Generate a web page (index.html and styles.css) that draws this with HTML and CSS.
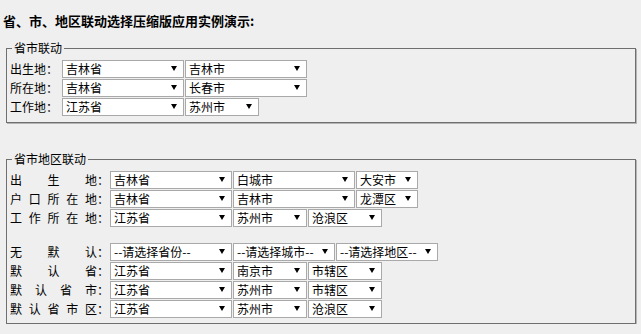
FILE: index.html
```html
<!DOCTYPE html>
<html lang="zh-CN">
<head>
    <meta charset="UTF-8">
    <title>省、市、地区联动选择压缩版应用实例演示</title>
    <link rel="stylesheet" href="styles.css">
</head>
<body>
    <h3 class="title">省、市、地区联动选择压缩版应用实例演示:</h3>

    <fieldset class="group">
        <legend>省市联动</legend>
        <div class="row">
            <label class="name">出生地：</label>
            <span class="pick w122"><select><option>吉林省</option><option>江苏省</option></select></span>
            <span class="pick w122"><select><option>吉林市</option><option>长春市</option></select></span>
        </div>
        <div class="row">
            <label class="name">所在地：</label>
            <span class="pick w122"><select><option>吉林省</option><option>江苏省</option></select></span>
            <span class="pick w122"><select><option>长春市</option><option>吉林市</option></select></span>
        </div>
        <div class="row">
            <label class="name">工作地：</label>
            <span class="pick w122"><select><option>江苏省</option><option>吉林省</option></select></span>
            <span class="pick w74"><select><option>苏州市</option><option>南京市</option></select></span>
        </div>
    </fieldset>

    <fieldset class="group second">
        <legend>省市地区联动</legend>
        <div class="row">
            <label class="name wide"><span class="chars"><span>出</span><span>生</span><span>地</span></span>：</label>
            <span class="pick w122"><select><option>吉林省</option></select></span>
            <span class="pick w122"><select><option>白城市</option></select></span>
            <span class="pick w62"><select><option>大安市</option></select></span>
        </div>
        <div class="row">
            <label class="name wide"><span class="chars"><span>户</span><span>口</span><span>所</span><span>在</span><span>地</span></span>：</label>
            <span class="pick w122"><select><option>吉林省</option></select></span>
            <span class="pick w122"><select><option>吉林市</option></select></span>
            <span class="pick w62"><select><option>龙潭区</option></select></span>
        </div>
        <div class="row">
            <label class="name wide"><span class="chars"><span>工</span><span>作</span><span>所</span><span>在</span><span>地</span></span>：</label>
            <span class="pick w122"><select><option>江苏省</option></select></span>
            <span class="pick w74"><select><option>苏州市</option></select></span>
            <span class="pick w74"><select><option>沧浪区</option></select></span>
        </div>

        <div class="spacer"></div>

        <div class="row">
            <label class="name wide"><span class="chars"><span>无</span><span>默</span><span>认</span></span>：</label>
            <span class="pick w122"><select><option>--请选择省份--</option></select></span>
            <span class="pick w102"><select><option>--请选择城市--</option></select></span>
            <span class="pick w102"><select><option>--请选择地区--</option></select></span>
        </div>
        <div class="row">
            <label class="name wide"><span class="chars"><span>默</span><span>认</span><span>省</span></span>：</label>
            <span class="pick w122"><select><option>江苏省</option></select></span>
            <span class="pick w74"><select><option>南京市</option></select></span>
            <span class="pick w74"><select><option>市辖区</option></select></span>
        </div>
        <div class="row">
            <label class="name wide"><span class="chars"><span>默</span><span>认</span><span>省</span><span>市</span></span>：</label>
            <span class="pick w122"><select><option>江苏省</option></select></span>
            <span class="pick w74"><select><option>苏州市</option></select></span>
            <span class="pick w74"><select><option>市辖区</option></select></span>
        </div>
        <div class="row">
            <label class="name wide"><span class="chars"><span>默</span><span>认</span><span>省</span><span>市</span><span>区</span></span>：</label>
            <span class="pick w122"><select><option>江苏省</option></select></span>
            <span class="pick w74"><select><option>苏州市</option></select></span>
            <span class="pick w74"><select><option>沧浪区</option></select></span>
        </div>
    </fieldset>
</body>
</html>
```

FILE: styles.css
```css
body {
    margin: 0;
    background-color: #efefef;
    color: #000;
    font-family: "Noto Sans CJK SC", "Liberation Sans", sans-serif;
    font-size: 12px;
}

.title {
    margin: 0;
    padding: 13px 0 0 3px;
    font-size: 13px;
    line-height: 16px;
    font-weight: bold;
}

.group {
    margin: 12px 5px 0 6px;
    padding: 5px 3px 5px 3px;
    border: 1px solid #6f6f6f;
    box-shadow: 1px 1px 0 #b4b4b4;
    min-width: 0;
}

.group.second {
    margin-top: 29px;
    padding-bottom: 4px;
}

.group legend {
    margin-left: 2px;
    padding: 0 2px;
    font-size: 12px;
    line-height: 14px;
}

.row {
    display: flex;
    align-items: flex-start;
    gap: 1px;
    height: 19px;
}

.spacer {
    height: 15px;
}

.name {
    width: 51px;
    line-height: 18px;
    white-space: nowrap;
}

.name.wide {
    display: flex;
    width: 99px;
}

.name .chars {
    display: flex;
    justify-content: space-between;
    width: 87px;
}

.pick {
    position: relative;
    display: block;
}

.pick select {
    -webkit-appearance: none;
    appearance: none;
    box-sizing: border-box;
    width: 100%;
    height: 18px;
    margin: 0;
    padding: 0 12px 0 3px;
    border: 1px solid #a9a9a9;
    border-radius: 0;
    background-color: #fff;
    color: #000;
    font-family: "Noto Sans CJK SC", "Liberation Sans", sans-serif;
    font-size: 12px;
    line-height: 16px;
    outline: none;
}

.pick::after {
    content: "";
    position: absolute;
    right: 7px;
    top: 6px;
    border-left: 3px solid transparent;
    border-right: 3px solid transparent;
    border-top: 5px solid #000;
    pointer-events: none;
}

.w122 { width: 122px; }
.w102 { width: 102px; }
.w74 { width: 74px; }
.w62 { width: 62px; }
```
